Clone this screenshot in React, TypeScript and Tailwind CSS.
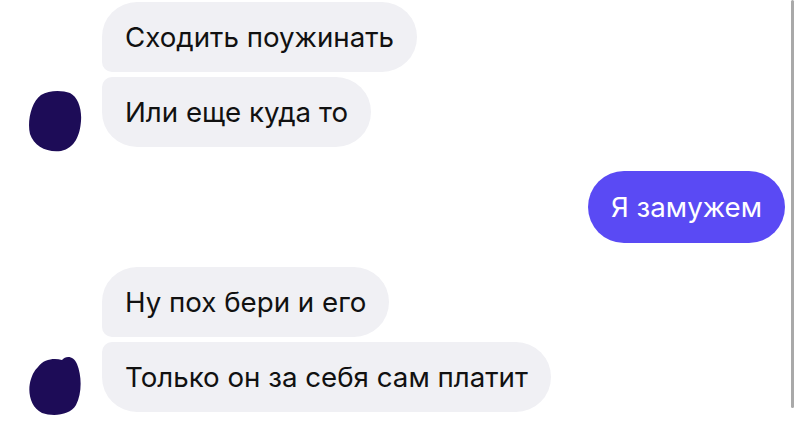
import React from 'react';

type Side = 'first' | 'last';

function Blob({ bump }: { bump?: boolean }) {
  const d = bump
    ? 'M10 12 C16 4 26 3 34 5 C38 0 46 1 49 9 C54 21 54 39 48 50 C42 60 26 62 14 58 C2 52 -1 36 3 24 C5 18 7 15 10 12 Z'
    : 'M13 5 C21 0 34 0 42 3 C50 7 54 19 53 31 C52 45 47 58 33 61 C19 63 6 56 2 44 C-1 32 3 12 13 5 Z';
  return (
    <svg width="54" height="62" viewBox="0 0 54 62" className="shrink-0">
      <path d={d} fill="#1d0c57" />
    </svg>
  );
}

function Incoming({ text, side }: { text: string; side: Side }) {
  const corners =
    side === 'first'
      ? 'rounded-[35px] rounded-bl-[10px]'
      : 'rounded-[35px] rounded-tl-[10px]';
  return (
    <div
      className={`self-start bg-[#f0f0f4] text-[#111] text-[27.7px] leading-[34px] px-[23px] py-[18px] ${corners}`}
    >
      {text}
    </div>
  );
}

function Group({ lines, bump }: { lines: string[]; bump?: boolean }) {
  return (
    <div className="flex items-end">
      <div className="w-[102px] pl-[28px] mb-[-5px]">
        <Blob bump={bump} />
      </div>
      <div className="flex flex-col gap-[5px]">
        {lines.map((t, i) => (
          <Incoming key={t} text={t} side={i === 0 ? 'first' : 'last'} />
        ))}
      </div>
    </div>
  );
}

export default function App() {
  return (
    <div
      className="relative w-[800px] h-[422px] bg-white overflow-hidden"
      style={{ fontFamily: 'Inter, "Liberation Sans", sans-serif' }}
    >
      <div className="flex flex-col pt-[2px]">
        <Group lines={['Сходить поужинать', 'Или еще куда то']} />

        <div className="flex justify-end pr-[15px] mt-[24px]">
          <div className="bg-[#5a4af4] text-white text-[27.7px] leading-[34px] px-[23px] py-[19px] rounded-[36px]">
            Я замужем
          </div>
        </div>

        <div className="mt-[24px]">
          <Group lines={['Ну пох бери и его', 'Только он за себя сам платит']} bump />
        </div>
      </div>

      {/* scroll indicator */}
      <div className="absolute right-[6px] top-0 h-[408px] w-[3px] rounded-full bg-[#a9a9a9]" />
    </div>
  );
}
